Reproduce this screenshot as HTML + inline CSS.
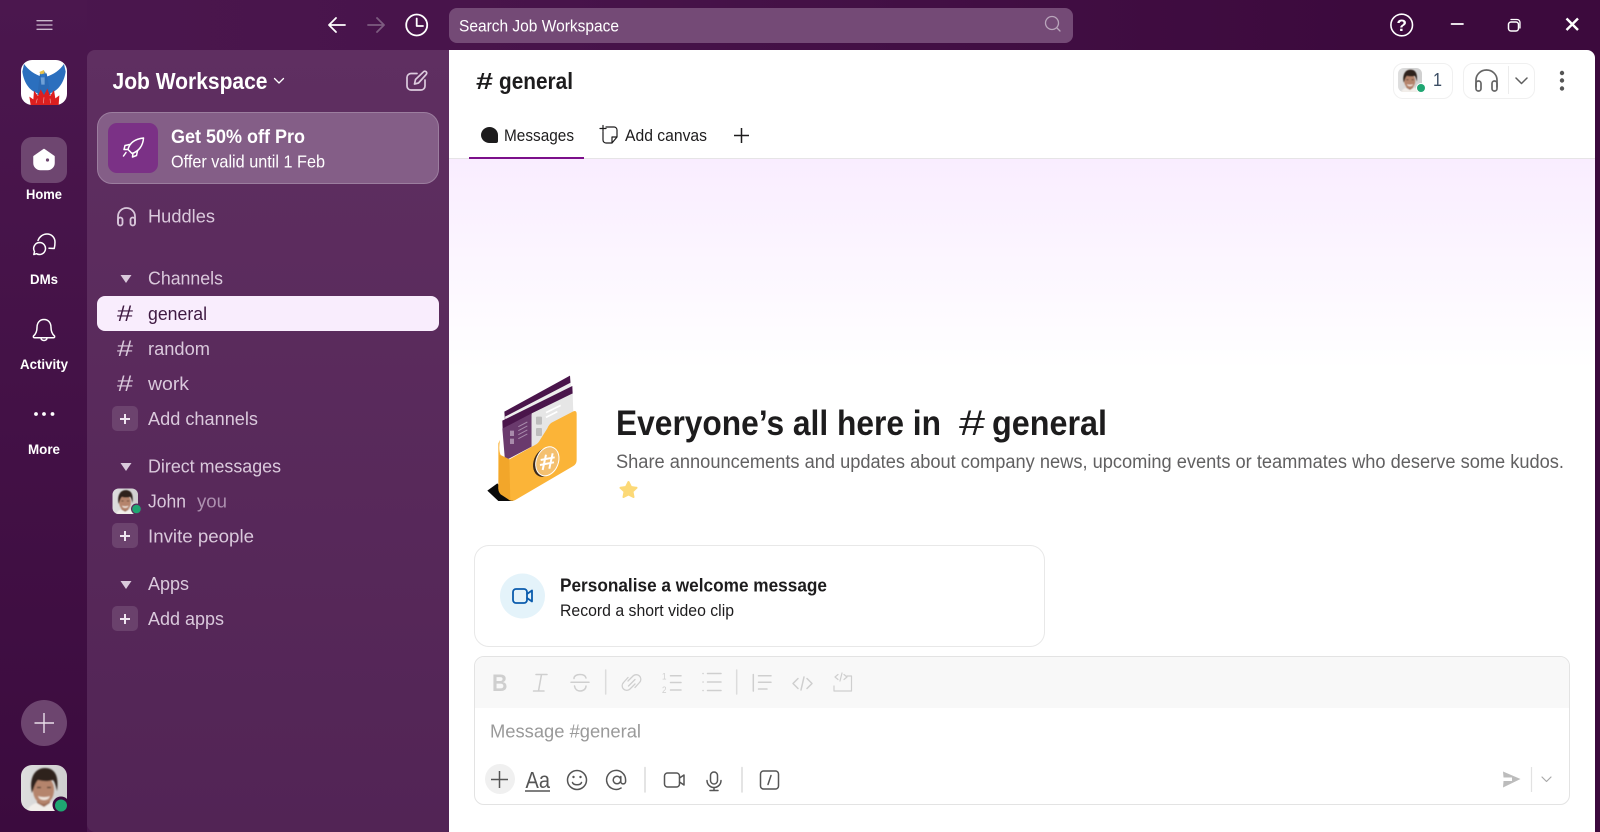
<!DOCTYPE html>
<html lang="en"><head><meta charset="utf-8"><title>general - Job Workspace</title>
<style>
html,body{margin:0;padding:0;width:1600px;height:832px;overflow:hidden;background:#3f0e40;font-family:"Liberation Sans",sans-serif}
.a{position:absolute;box-sizing:border-box}
svg{position:absolute;left:0;top:0}
svg text{font-family:"Liberation Sans",sans-serif}
.s{fill:#dac9dc;font-size:18.5px}
.l{fill:#fff;font-size:14px;font-weight:700}
.i{fill:none;stroke-linecap:round;stroke-linejoin:round}
</style></head><body>
<div class="a" style="left:0;top:0;width:1600px;height:832px;background:linear-gradient(90deg,#4b174e 0%,#47134a 35%,#3c0a3d 85%)"></div>
<div class="a" style="left:0;top:0;width:87px;height:832px;background:linear-gradient(180deg,#4b174e,#3b0b3e)"></div>
<div class="a" style="left:87px;top:50px;width:362px;height:782px;background:linear-gradient(180deg,#5f2f61,#522455);border-radius:8px 0 0 8px"></div>
<div class="a" style="left:449px;top:8px;width:624px;height:35px;border-radius:8px;background:#744a76"></div>
<div class="a" style="left:449px;top:50px;width:1146px;height:782px;background:#fff;border-radius:0 8px 0 0"></div>
<div class="a" style="left:449px;top:159px;width:1146px;height:210px;background:linear-gradient(180deg,#f9edff,#fff)"></div>
<div class="a" style="left:449px;top:158px;width:1146px;height:1px;background:#e6e4e6"></div>
<div class="a" style="left:469px;top:157px;width:115px;height:2px;background:#7c0f8a"></div>
<div class="a" style="left:97px;top:112px;width:342px;height:72px;border-radius:15px;background:#845e87;border:1px solid #9c7e9f"></div>
<div class="a" style="left:108px;top:123px;width:50px;height:50px;border-radius:9px;background:#7b3186"></div>
<div class="a" style="left:97px;top:296px;width:342px;height:35px;border-radius:8px;background:#f9edfd"></div>
<div class="a" style="left:21px;top:137px;width:46px;height:46px;border-radius:11px;background:#6e4670"></div>
<div class="a" style="left:21px;top:700px;width:46px;height:46px;border-radius:50%;background:#6d456f"></div>
<div class="a" style="left:112px;top:406px;width:26px;height:25px;border-radius:5px;background:#6c436e"></div>
<div class="a" style="left:112px;top:523px;width:26px;height:25px;border-radius:5px;background:#6c436e"></div>
<div class="a" style="left:112px;top:606px;width:26px;height:25px;border-radius:5px;background:#6a416c"></div>
<div class="a" style="left:1393px;top:63px;width:60px;height:36px;border-radius:10px;border:1px solid #f0f0f0"></div>
<div class="a" style="left:1463px;top:63px;width:72px;height:36px;border-radius:10px;border:1px solid #f0f0f0"></div>
<div class="a" style="left:1508px;top:66px;width:1px;height:28px;background:#ececec"></div>
<div class="a" style="left:474px;top:545px;width:571px;height:102px;border-radius:15px;border:1px solid #e8e8e8;background:#fff"></div>
<div class="a" style="left:474px;top:656px;width:1096px;height:149px;border-radius:10px;border:1px solid #e3e3e3;background:#fff;overflow:hidden"><div style="height:51px;background:#f8f8f8"></div></div>
<div class="a" style="left:485px;top:764px;width:30px;height:30px;border-radius:50%;background:#f0f0f0"></div>

<svg width="1600" height="832" viewBox="0 0 1600 832" xmlns="http://www.w3.org/2000/svg">
<defs>
<filter id="soft" x="-10%" y="-10%" width="120%" height="120%"><feGaussianBlur stdDeviation=".8"/></filter>
<linearGradient id="bgf" x1="0" x2="1"><stop offset="0" stop-color="#dedede"/><stop offset="1" stop-color="#cfcfcf"/></linearGradient>
<g id="face">
<rect width="46" height="46" fill="url(#bgf)"/>
<g filter="url(#soft)">
<path d="M6 47c1-6 7-9 13-10h9c7 1 12 4 13 10Z" fill="#f2eeea"/>
<path d="M16 31h13v7l-6 4-7-4Z" fill="#9c6c55"/>
<ellipse cx="22.500" cy="25" rx="10.500" ry="14" fill="#b5846c"/>
<path d="M11 28C8 14 13 3 24 3c10 0 14 8 12 23-1-4-2-9-4-11-6 2-11 1-15 0-3 3-4 8-6 13Z" fill="#2e231d"/>
<path d="M17 31c3 1.500 9 1.500 12 0-1 3-3 4-6 4-3 0-5-1-6-4Z" fill="#efe4dc"/>
<path d="M16 22.500h4M26 22.500h4" stroke="#4a352b" stroke-width="1.300"/>
</g>
</g>
<clipPath id="c46"><rect width="46" height="46" rx="11"/></clipPath>
</defs>

<!-- title bar -->
<path class="i" stroke="#cbb9cd" stroke-width="1.300" d="M37 20.700H52M37 25H52M37 29.300H52"/>
<path class="i" stroke="#fff" stroke-width="1.800" d="M345 25H329M336 18L329 25L336 32"/>
<path class="i" stroke="#7d5c80" stroke-width="1.800" d="M368 25H384M377 18L384 25L377 32"/>
<circle class="i" cx="416.700" cy="25" r="10.500" stroke="#fff" stroke-width="1.800"/>
<path class="i" stroke="#fff" stroke-width="1.800" d="M416.700 18.500V26H423"/>
<text x="459" y="31.500" fill="#fff" font-size="17" textLength="160" lengthAdjust="spacingAndGlyphs">Search Job Workspace</text>
<circle class="i" cx="1052" cy="23" r="6.500" stroke="#b9a5bb" stroke-width="1.300"/>
<path class="i" stroke="#b9a5bb" stroke-width="1.300" d="M1057 28L1060 31"/>
<circle class="i" cx="1401.700" cy="25" r="10.800" stroke="#fff" stroke-width="1.600"/>
<text x="1401.700" y="31" fill="#fff" font-size="17" font-weight="700" text-anchor="middle">?</text>
<path class="i" stroke="#fff" stroke-width="1.700" d="M1451.500 24H1463"/>
<rect class="i" x="1508.500" y="22" width="10" height="9" rx="2.500" stroke="#fff" stroke-width="1.500"/>
<path class="i" stroke="#fff" stroke-width="1.300" d="M1511 19.500H1517a3 3 0 0 1 3 3V28"/>
<path stroke="#fff" stroke-width="2.400" fill="none" d="M1566.500 18.500L1578 30M1578 18.500L1566.500 30"/>

<!-- rail: workspace logo -->
<g transform="translate(21 60)">
<rect width="46" height="45" rx="11" fill="#fff"/>
<g transform="translate(-21 -20) scale(.3333)">
<path d="M72 72C85 90 105 104 125 110L122 162C90 157 72 130 67 95Z" fill="#2b6fbe"/>
<path d="M192 72C180 90 160 104 140 110L142 162C172 157 192 130 197 95Z" fill="#2b6fbe"/>
<path d="M120 100L140 100L152 165L112 165Z" fill="#2a69b4"/>
<path d="M122 100C123 92 133 90 136 98L136 112L124 112Z" fill="#2f75c4"/>
<path d="M118 96L132 90L134 100L122 103Z" fill="#e4c04a"/>
<path d="M122 112L134 112L134 134L124 134Z" fill="#6fa0d6"/>
<path d="M92 195L88 170L100 178L102 152L114 168L122 148L132 165L142 146L150 168L162 150L166 175L178 166L176 195Z" fill="#dc1f1f"/>
<path d="M108 190L112 176M130 190L132 172M152 190L150 176" stroke="#f0a0a0" stroke-width="2"/>
</g></g>
<!-- rail nav -->
<path fill="#fff" stroke="#fff" stroke-width="1.500" stroke-linejoin="round" d="M44 149.500L54 156.500V163a6.500 6.500 0 0 1-6.500 6.500H40.500A6.500 6.500 0 0 1 34 163V156.500Z"/>
<circle cx="47.500" cy="160" r="1.600" fill="#6e4670"/>
<text class="l" x="26" y="199" textLength="36" lengthAdjust="spacingAndGlyphs">Home</text>
<g class="i" stroke="#fff" stroke-width="1.500"><path d="M39.500 242.500a6 6 0 1 1-3 11.200L33.800 254.500l.7-3A6 6 0 0 1 39.500 242.500Z"/><path d="M38 240.500C39.500 236.500 43 234 47 234c4.500 0 8 3.500 8 8 0 2.500-.3 4.700-.8 6.500l-5.200-.3"/></g>
<text class="l" x="30" y="284" textLength="28" lengthAdjust="spacingAndGlyphs">DMs</text>
<path class="i" stroke="#fff" stroke-width="1.500" d="M44 319.500c-4.500 0-7 3.500-7 8 0 4-1.200 6.500-3.500 8.500-.5 1 0 1.700 1 1.700h19c1 0 1.500-.7 1-1.700-2.300-2-3.500-4.500-3.500-8.500 0-4.500-2.500-8-7-8ZM41 338a3 2.500 0 0 0 6 0"/>
<text class="l" x="20" y="369" textLength="48" lengthAdjust="spacingAndGlyphs">Activity</text>
<circle cx="36" cy="414" r="1.900" fill="#fff"/><circle cx="44" cy="414" r="1.900" fill="#fff"/><circle cx="52.500" cy="414" r="1.900" fill="#fff"/>
<text class="l" x="28" y="454" textLength="32" lengthAdjust="spacingAndGlyphs">More</text>
<path stroke="#e9dfea" stroke-width="1.400" d="M44 713V733M34.500 723H54"/>
<g transform="translate(21 765)"><g clip-path="url(#c46)"><use href="#face"/></g></g>
<circle cx="61" cy="805" r="8.500" fill="#3b0b3e"/><circle cx="61" cy="805.500" r="6" fill="#1fa672"/>

<!-- sidebar -->
<text x="112.500" y="89" fill="#fff" font-size="23.500" font-weight="700" textLength="155" lengthAdjust="spacingAndGlyphs">Job Workspace</text>
<path class="i" stroke="#fff" stroke-width="1.300" d="M274.500 78.500L279 83L283.500 78.500"/>
<path class="i" stroke="#dccbde" stroke-width="1.700" d="M417 73.500H411a4 4 0 0 0-4 4V86a4 4 0 0 0 4 4H421a4 4 0 0 0 4-4V80M414.500 84L415.500 79.500L423.500 71.800a1.800 1.800 0 0 1 2.700 2.600L418.500 83Z"/>
<text x="171" y="143" fill="#fff" font-size="19.500" font-weight="700" textLength="134" lengthAdjust="spacingAndGlyphs">Get 50% off Pro</text>
<text x="171" y="167.500" fill="#fff" font-size="17.500" textLength="154" lengthAdjust="spacingAndGlyphs">Offer valid until 1 Feb</text>
<g class="i" stroke="#fff" stroke-width="1.500"><path d="M128 149.500C129.500 143 135 139 143.500 138C143 146 138.500 151.500 132 153.500Z"/><path d="M129.500 144.500L125 145.500L124 149.500H128M133 153L132.500 157L136.500 155.500L137.500 151"/><path d="M126 152.500L123.500 156"/></g>
<g class="i" stroke="#d8c6da" stroke-width="1.800"><path d="M118 223V216.500a8.500 8.500 0 0 1 17 0V223"/><rect x="118" y="217.500" width="4.500" height="8" rx="2.200"/><rect x="130.500" y="217.500" width="4.500" height="8" rx="2.200"/></g>
<text class="s" x="148" y="222.300" textLength="67" lengthAdjust="spacingAndGlyphs">Huddles</text>

<path fill="#dac9dc" d="M120.500 275H131.500L126 283ZM120.500 463H131.500L126 471ZM120.500 581H131.500L126 589Z"/>
<text class="s" x="148" y="284.600" textLength="75" lengthAdjust="spacingAndGlyphs">Channels</text>
<text x="117" y="321" fill="#3f1a42" font-size="22" textLength="16" lengthAdjust="spacingAndGlyphs">#</text>
<text x="148" y="320" fill="#3f1a42" font-size="18.500" textLength="59" lengthAdjust="spacingAndGlyphs">general</text>
<text class="s" x="117" y="356" style="font-size:22px" textLength="16" lengthAdjust="spacingAndGlyphs">#</text>
<text class="s" x="148" y="355" textLength="62" lengthAdjust="spacingAndGlyphs">random</text>
<text class="s" x="117" y="391" style="font-size:22px" textLength="16" lengthAdjust="spacingAndGlyphs">#</text>
<text class="s" x="148" y="390" textLength="41" lengthAdjust="spacingAndGlyphs">work</text>
<path stroke="#efe6f0" stroke-width="2" d="M125 414V424M120 419H130M125 531V541M120 536H130M125 614V624M120 619H130"/>
<text class="s" x="148" y="425" textLength="110" lengthAdjust="spacingAndGlyphs">Add channels</text>
<text class="s" x="148" y="472.500" textLength="133" lengthAdjust="spacingAndGlyphs">Direct messages</text>
<g transform="translate(112.500 488.500) scale(.5543)"><g clip-path="url(#c46)"><use href="#face"/></g></g>
<circle cx="136.500" cy="509" r="5.500" fill="#5a2a5c"/><circle cx="136.500" cy="509" r="4.300" fill="#1fa672"/>
<text class="s" x="148" y="507.700" textLength="38" lengthAdjust="spacingAndGlyphs">John</text>
<text x="197" y="507.700" fill="#ad91b0" font-size="18.500" textLength="30" lengthAdjust="spacingAndGlyphs">you</text>
<text class="s" x="148" y="542.700" textLength="106" lengthAdjust="spacingAndGlyphs">Invite people</text>
<text class="s" x="148" y="590" textLength="41" lengthAdjust="spacingAndGlyphs">Apps</text>
<text class="s" x="148" y="625" textLength="76" lengthAdjust="spacingAndGlyphs">Add apps</text>

<!-- channel header -->
<text x="476" y="89" fill="#1d1c1d" font-size="23" font-weight="700" textLength="17" lengthAdjust="spacingAndGlyphs">#</text>
<text x="499" y="89" fill="#1d1c1d" font-size="23" font-weight="700" textLength="74" lengthAdjust="spacingAndGlyphs">general</text>
<path fill="#1d1c1d" d="M489.500 127a8.500 8 0 0 1 8.500 8v6a2 2 0 0 1-2 2h-6.500a8.500 8 0 0 1 0-16Z"/>
<text x="504" y="141" fill="#1d1c1d" font-size="17" textLength="70" lengthAdjust="spacingAndGlyphs">Messages</text>
<path class="i" stroke="#1d1c1d" stroke-width="1.200" d="M606 127H614a3 3 0 0 1 3 3V137L612 143H606a3 3 0 0 1-3-3V132M617 137H612V143M600 128.500H606M603 125.500V131.500"/>
<text x="625" y="141" fill="#1d1c1d" font-size="17" textLength="82" lengthAdjust="spacingAndGlyphs">Add canvas</text>
<path stroke="#1d1c1d" stroke-width="1.500" d="M741.500 128V143M734 135.500H749"/>
<g transform="translate(1398 68) scale(.5217)"><g clip-path="url(#c46)"><use href="#face"/></g></g>
<circle cx="1421" cy="88" r="5" fill="#fff"/><circle cx="1421" cy="88" r="4" fill="#1fa672"/>
<text x="1433" y="86" fill="#3b4d63" font-size="18" textLength="9" lengthAdjust="spacingAndGlyphs">1</text>
<g class="i" stroke="#666" stroke-width="1.700"><path d="M1476 87V80a10.500 10 0 0 1 21 0V87"/><rect x="1476" y="81" width="5" height="10" rx="2.400"/><rect x="1492" y="81" width="5" height="10" rx="2.400"/></g>
<path class="i" stroke="#5f5f5f" stroke-width="1.500" d="M1516 78L1521.500 83.500L1527 78"/>
<circle cx="1562" cy="73" r="2.200" fill="#555"/><circle cx="1562" cy="80.500" r="2.200" fill="#555"/><circle cx="1562" cy="88.500" r="2.200" fill="#555"/>

<!-- folder illustration -->
<g transform="translate(470 360) scale(.3333)">
<path d="M52 392L82 370L130 423L85 423Z" fill="#0b0b0b"/>
<path d="M103 155L300 47L302 75L105 182Z" fill="#4a154b"/>
<path d="M105 170L302 68L308 110L110 215Z" fill="#eee"/>
<path d="M97 182L307 78L308 102L98 208Z" fill="#4a154b"/>
<path d="M97 206L185 160V260L105 302Z" fill="#6a3a6d"/>
<path d="M185 160L308 100L310 160L185 280Z" fill="#e6e6e6"/>
<path d="M228 158L272 136M228 172L262 155" stroke="#fff" stroke-width="5"/>
<path d="M145 200L172 186M145 212L172 198M145 224L172 210M145 236L172 222" stroke="#a88bab" stroke-width="3"/>
<rect x="198" y="170" width="18" height="24" rx="3" fill="#bdbdbd"/><rect x="198" y="204" width="18" height="24" rx="3" fill="#bdbdbd"/>
<rect x="120" y="212" width="12" height="16" fill="#a88bab"/><rect x="120" y="236" width="12" height="16" fill="#a88bab"/>
<path d="M85 250V385Q85 396 95 403L118 420Q127 425 136 420L310 318Q320 312 320 300V162Q320 150 310 154L245 188Q238 192 232 205L210 240Q205 250 195 255L118 298L92 285Q85 270 90 240Z" fill="#fbb438"/>
<path d="M88 285L118 298L121 422L92 403Q85 396 85 385Z" fill="#f2a62a"/>
<ellipse cx="224" cy="307" rx="33" ry="45" transform="rotate(22 224 307)" fill="#3d2a1c"/>
<ellipse cx="232" cy="304" rx="33" ry="45" transform="rotate(22 232 304)" fill="#f4c070" stroke="#fff" stroke-width="3"/>
<path d="M228 284L218 330M248 280L238 326M212 300L254 292M210 315L252 307" stroke="#fff" stroke-width="6" fill="none"/>
</g>

<!-- intro -->
<text x="616" y="435" fill="#1d1c1d" font-size="35" font-weight="700" textLength="325" lengthAdjust="spacingAndGlyphs">Everyone’s all here in</text>
<text x="959" y="435" fill="#1d1c1d" font-size="35" font-weight="400" textLength="26" lengthAdjust="spacingAndGlyphs">#</text>
<text x="992" y="435" fill="#1d1c1d" font-size="35" font-weight="700" textLength="115" lengthAdjust="spacingAndGlyphs">general</text>
<text x="616" y="468" fill="#616061" font-size="19" textLength="948" lengthAdjust="spacingAndGlyphs">Share announcements and updates about company news, upcoming events or teammates who deserve some kudos.</text>
<path fill="#fcd977" stroke="#fcd977" stroke-width="2" stroke-linejoin="round" d="M628.500 482L631 487L636.500 487.800L632.500 491.500L633.500 497L628.500 494.500L623.500 497L624.500 491.500L620.500 487.800L626 487Z"/>

<!-- welcome card -->
<circle cx="522.500" cy="596" r="22.500" fill="#e4f3fa"/>
<g class="i" stroke="#0b5cad" stroke-width="1.800"><rect x="513" y="589" width="14" height="14" rx="3"/><path d="M527 594L532 590.500V601.500L527 598"/></g>
<text x="560" y="591.700" fill="#1d1c1d" font-size="18.500" font-weight="700" textLength="267" lengthAdjust="spacingAndGlyphs">Personalise a welcome message</text>
<text x="560" y="616" fill="#1d1c1d" font-size="16.500" textLength="174" lengthAdjust="spacingAndGlyphs">Record a short video clip</text>

<!-- composer toolbar -->
<text x="492" y="691" fill="#cfcfcf" font-size="24" font-weight="700" textLength="15.500" lengthAdjust="spacingAndGlyphs">B</text>
<g class="i" stroke="#cfcfcf" stroke-width="1.500">
<path d="M536 674.500H547M533.500 691H544M541.500 674.500L538.500 691"/>
<path d="M571 682.300H589M586 678c-.5-2.500-3-3.500-6-3.500-3.500 0-6 1.500-6 4M574.500 686c.5 3 2.500 5 5.500 5 3.500 0 6-2 6-5"/>
<path d="M605.700 670V694M736.700 670V694" stroke="#dcdcdc"/>
<path d="M628 681L633 676a4.500 4.500 0 0 1 6.500 6.500L635 687.500M635 684L630 689a4.500 4.500 0 0 1-6.500-6.500L628 677.500M628.500 686L635 679.500" stroke-width="1.300"/>
<path d="M670.500 675.700H681M670.500 682.500H681M670.500 690H681"/>
<path d="M707.500 673.500H721M707.500 682H721M707.500 690.500H721"/>
<path d="M703 673.500h.1M703 682h.1M703 690.500h.1"/>
<path d="M753.300 674.500V691M758.500 675.700H771M758.500 682.300H771M758.500 689H767"/>
<path d="M798 678.500L793 683.500L798 688.500M807 678.500L812 683.500L807 688.500M804 677L801 690"/>
<path d="M834 686V691H851.500V676H847M838 674.500L835 677L838 679.500M844 674.500L847 677L844 679.500" stroke-width="1.200"/>
<path d="M842 673L840 681" stroke-width="1.200"/>
</g>
<text x="662" y="679.500" fill="#cfcfcf" font-size="9" textLength="4.500" lengthAdjust="spacingAndGlyphs">1</text>
<text x="662" y="693" fill="#cfcfcf" font-size="9" textLength="4.500" lengthAdjust="spacingAndGlyphs">2</text>
<text x="490" y="737.700" fill="#9a9a9a" font-size="18.500" textLength="151" lengthAdjust="spacingAndGlyphs">Message #general</text>

<!-- composer actions -->
<path stroke="#555" stroke-width="1.500" d="M499.500 771V788M491 779.500H508"/>
<text x="525.500" y="788" fill="#555" font-size="23" textLength="24.500" lengthAdjust="spacingAndGlyphs">Aa</text>
<path stroke="#555" stroke-width="1.400" d="M525 791H550"/>
<g class="i" stroke="#555" stroke-width="1.500">
<circle cx="577" cy="780" r="9.500"/>
<path d="M572.500 782.500c1 3 8 3 9 0"/>
<circle cx="617" cy="780" r="3.800"/>
<path d="M620.800 776.500V781.500a2.400 2.400 0 0 0 4.800 0V780a9.500 9.500 0 1 0-4.500 8"/>
<path d="M645 767.500V792M742 767.500V792" stroke="#dcdcdc"/>
<rect x="664.500" y="773" width="15" height="14" rx="3"/>
<path d="M679.500 778L684 775V785L679.500 782"/>
<rect x="710.500" y="772" width="7" height="12" rx="3.500"/>
<path d="M707 780.500a7 7 0 0 0 14 0M714 787.500V790M710 790.500H718"/>
<rect x="760.500" y="771" width="18" height="18" rx="3"/>
<path d="M771 775.500L768 784.500"/>
</g>
<circle cx="573.500" cy="777" r="1.200" fill="#555"/><circle cx="580.500" cy="777" r="1.200" fill="#555"/>
<path fill="#bcbcbc" d="M1503 771.500L1520.500 779L1503 787.500L1503.500 781H1512V777.500H1503.500Z"/>
<path stroke="#e2e2e2" stroke-width="1.200" d="M1531.500 767V792"/>
<path class="i" stroke="#a9a9a9" stroke-width="1.200" d="M1542 777L1546.500 781.500L1551 777"/>
</svg>
</body></html>
